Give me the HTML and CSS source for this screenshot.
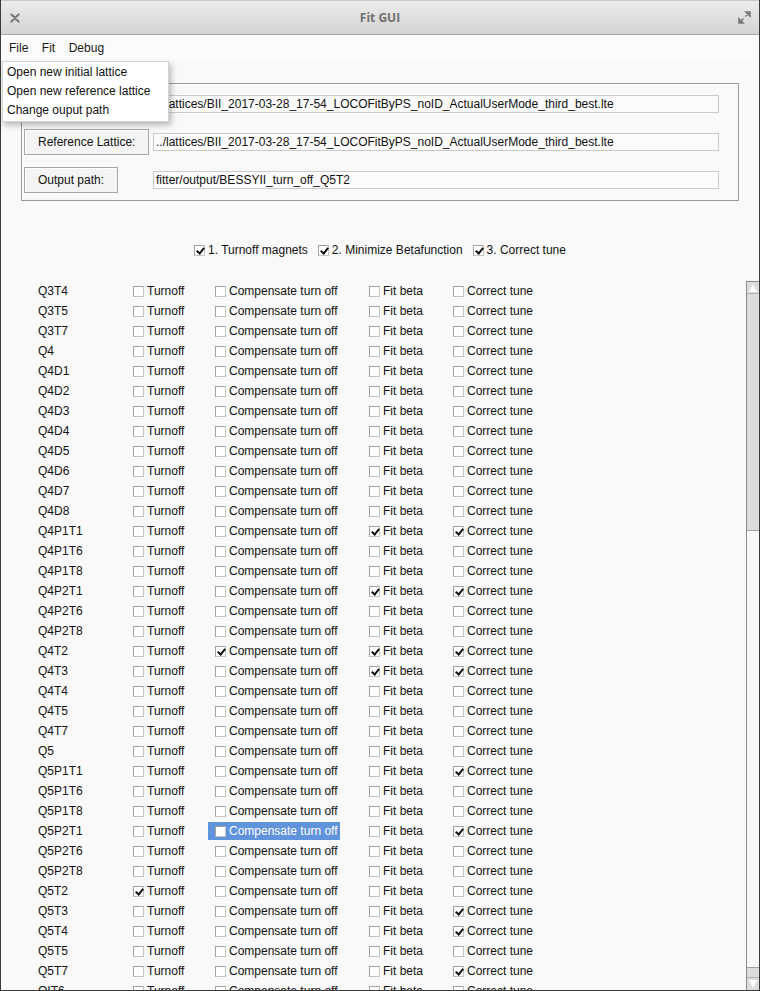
FILE: index.html
```html
<!DOCTYPE html>
<html>
<head>
<meta charset="utf-8">
<title>Fit GUI</title>
<link rel="stylesheet" href="styles.css">
</head>
<body>
<div class="window">
  <div class="titlebar">
    <svg class="tb-close" width="10" height="10" viewBox="0 0 10 10"><path d="M1.5 1.5 L8.5 8.5 M8.5 1.5 L1.5 8.5" stroke="#7a7a7a" stroke-width="2.2" stroke-linecap="round"/></svg>
    <div class="tb-title">Fit GUI</div>
    <svg class="tb-max" width="13" height="13" viewBox="0 0 13 13"><path d="M7.5 5.5 L11.5 1.5 M8 1 L12 1 L12 5 Z M5.5 7.5 L1.5 11.5 M1 8 L1 12 L5 12 Z" stroke="#7a7a7a" stroke-width="1.6" fill="#7a7a7a"/></svg>
  </div>
  <div class="menubar">
    <span class="mi">File</span><span class="mi">Fit</span><span class="mi">Debug</span>
  </div>
  <div class="main">
    <div class="frame">
      <div class="btn">Initial Lattice:</div>
      <div class="field">../lattices/BII_2017-03-28_17-54_LOCOFitByPS_noID_ActualUserMode_third_best.lte</div>
      <div class="btn">Reference Lattice:</div>
      <div class="field">../lattices/BII_2017-03-28_17-54_LOCOFitByPS_noID_ActualUserMode_third_best.lte</div>
      <div class="btn">Output path:</div>
      <div class="field">fitter/output/BESSYII_turn_off_Q5T2</div>
    </div>
    <div class="steps">
      <label class="ck"><i class="cb on"></i>1. Turnoff magnets</label>
      <label class="ck"><i class="cb on"></i>2. Minimize Betafunction</label>
      <label class="ck"><i class="cb on"></i>3. Correct tune</label>
    </div>
    <div class="listwrap">
      <div class="list">
        <div class="row"><span class="nm">Q3T4</span><label class="ck"><i class="cb"></i>Turnoff</label><label class="ck"><i class="cb"></i>Compensate turn off</label><label class="ck"><i class="cb"></i>Fit beta</label><label class="ck"><i class="cb"></i>Correct tune</label></div>
        <div class="row"><span class="nm">Q3T5</span><label class="ck"><i class="cb"></i>Turnoff</label><label class="ck"><i class="cb"></i>Compensate turn off</label><label class="ck"><i class="cb"></i>Fit beta</label><label class="ck"><i class="cb"></i>Correct tune</label></div>
        <div class="row"><span class="nm">Q3T7</span><label class="ck"><i class="cb"></i>Turnoff</label><label class="ck"><i class="cb"></i>Compensate turn off</label><label class="ck"><i class="cb"></i>Fit beta</label><label class="ck"><i class="cb"></i>Correct tune</label></div>
        <div class="row"><span class="nm">Q4</span><label class="ck"><i class="cb"></i>Turnoff</label><label class="ck"><i class="cb"></i>Compensate turn off</label><label class="ck"><i class="cb"></i>Fit beta</label><label class="ck"><i class="cb"></i>Correct tune</label></div>
        <div class="row"><span class="nm">Q4D1</span><label class="ck"><i class="cb"></i>Turnoff</label><label class="ck"><i class="cb"></i>Compensate turn off</label><label class="ck"><i class="cb"></i>Fit beta</label><label class="ck"><i class="cb"></i>Correct tune</label></div>
        <div class="row"><span class="nm">Q4D2</span><label class="ck"><i class="cb"></i>Turnoff</label><label class="ck"><i class="cb"></i>Compensate turn off</label><label class="ck"><i class="cb"></i>Fit beta</label><label class="ck"><i class="cb"></i>Correct tune</label></div>
        <div class="row"><span class="nm">Q4D3</span><label class="ck"><i class="cb"></i>Turnoff</label><label class="ck"><i class="cb"></i>Compensate turn off</label><label class="ck"><i class="cb"></i>Fit beta</label><label class="ck"><i class="cb"></i>Correct tune</label></div>
        <div class="row"><span class="nm">Q4D4</span><label class="ck"><i class="cb"></i>Turnoff</label><label class="ck"><i class="cb"></i>Compensate turn off</label><label class="ck"><i class="cb"></i>Fit beta</label><label class="ck"><i class="cb"></i>Correct tune</label></div>
        <div class="row"><span class="nm">Q4D5</span><label class="ck"><i class="cb"></i>Turnoff</label><label class="ck"><i class="cb"></i>Compensate turn off</label><label class="ck"><i class="cb"></i>Fit beta</label><label class="ck"><i class="cb"></i>Correct tune</label></div>
        <div class="row"><span class="nm">Q4D6</span><label class="ck"><i class="cb"></i>Turnoff</label><label class="ck"><i class="cb"></i>Compensate turn off</label><label class="ck"><i class="cb"></i>Fit beta</label><label class="ck"><i class="cb"></i>Correct tune</label></div>
        <div class="row"><span class="nm">Q4D7</span><label class="ck"><i class="cb"></i>Turnoff</label><label class="ck"><i class="cb"></i>Compensate turn off</label><label class="ck"><i class="cb"></i>Fit beta</label><label class="ck"><i class="cb"></i>Correct tune</label></div>
        <div class="row"><span class="nm">Q4D8</span><label class="ck"><i class="cb"></i>Turnoff</label><label class="ck"><i class="cb"></i>Compensate turn off</label><label class="ck"><i class="cb"></i>Fit beta</label><label class="ck"><i class="cb"></i>Correct tune</label></div>
        <div class="row"><span class="nm">Q4P1T1</span><label class="ck"><i class="cb"></i>Turnoff</label><label class="ck"><i class="cb"></i>Compensate turn off</label><label class="ck"><i class="cb on"></i>Fit beta</label><label class="ck"><i class="cb on"></i>Correct tune</label></div>
        <div class="row"><span class="nm">Q4P1T6</span><label class="ck"><i class="cb"></i>Turnoff</label><label class="ck"><i class="cb"></i>Compensate turn off</label><label class="ck"><i class="cb"></i>Fit beta</label><label class="ck"><i class="cb"></i>Correct tune</label></div>
        <div class="row"><span class="nm">Q4P1T8</span><label class="ck"><i class="cb"></i>Turnoff</label><label class="ck"><i class="cb"></i>Compensate turn off</label><label class="ck"><i class="cb"></i>Fit beta</label><label class="ck"><i class="cb"></i>Correct tune</label></div>
        <div class="row"><span class="nm">Q4P2T1</span><label class="ck"><i class="cb"></i>Turnoff</label><label class="ck"><i class="cb"></i>Compensate turn off</label><label class="ck"><i class="cb on"></i>Fit beta</label><label class="ck"><i class="cb on"></i>Correct tune</label></div>
        <div class="row"><span class="nm">Q4P2T6</span><label class="ck"><i class="cb"></i>Turnoff</label><label class="ck"><i class="cb"></i>Compensate turn off</label><label class="ck"><i class="cb"></i>Fit beta</label><label class="ck"><i class="cb"></i>Correct tune</label></div>
        <div class="row"><span class="nm">Q4P2T8</span><label class="ck"><i class="cb"></i>Turnoff</label><label class="ck"><i class="cb"></i>Compensate turn off</label><label class="ck"><i class="cb"></i>Fit beta</label><label class="ck"><i class="cb"></i>Correct tune</label></div>
        <div class="row"><span class="nm">Q4T2</span><label class="ck"><i class="cb"></i>Turnoff</label><label class="ck"><i class="cb on"></i>Compensate turn off</label><label class="ck"><i class="cb on"></i>Fit beta</label><label class="ck"><i class="cb on"></i>Correct tune</label></div>
        <div class="row"><span class="nm">Q4T3</span><label class="ck"><i class="cb"></i>Turnoff</label><label class="ck"><i class="cb"></i>Compensate turn off</label><label class="ck"><i class="cb on"></i>Fit beta</label><label class="ck"><i class="cb on"></i>Correct tune</label></div>
        <div class="row"><span class="nm">Q4T4</span><label class="ck"><i class="cb"></i>Turnoff</label><label class="ck"><i class="cb"></i>Compensate turn off</label><label class="ck"><i class="cb"></i>Fit beta</label><label class="ck"><i class="cb"></i>Correct tune</label></div>
        <div class="row"><span class="nm">Q4T5</span><label class="ck"><i class="cb"></i>Turnoff</label><label class="ck"><i class="cb"></i>Compensate turn off</label><label class="ck"><i class="cb"></i>Fit beta</label><label class="ck"><i class="cb"></i>Correct tune</label></div>
        <div class="row"><span class="nm">Q4T7</span><label class="ck"><i class="cb"></i>Turnoff</label><label class="ck"><i class="cb"></i>Compensate turn off</label><label class="ck"><i class="cb"></i>Fit beta</label><label class="ck"><i class="cb"></i>Correct tune</label></div>
        <div class="row"><span class="nm">Q5</span><label class="ck"><i class="cb"></i>Turnoff</label><label class="ck"><i class="cb"></i>Compensate turn off</label><label class="ck"><i class="cb"></i>Fit beta</label><label class="ck"><i class="cb"></i>Correct tune</label></div>
        <div class="row"><span class="nm">Q5P1T1</span><label class="ck"><i class="cb"></i>Turnoff</label><label class="ck"><i class="cb"></i>Compensate turn off</label><label class="ck"><i class="cb"></i>Fit beta</label><label class="ck"><i class="cb on"></i>Correct tune</label></div>
        <div class="row"><span class="nm">Q5P1T6</span><label class="ck"><i class="cb"></i>Turnoff</label><label class="ck"><i class="cb"></i>Compensate turn off</label><label class="ck"><i class="cb"></i>Fit beta</label><label class="ck"><i class="cb"></i>Correct tune</label></div>
        <div class="row"><span class="nm">Q5P1T8</span><label class="ck"><i class="cb"></i>Turnoff</label><label class="ck"><i class="cb"></i>Compensate turn off</label><label class="ck"><i class="cb"></i>Fit beta</label><label class="ck"><i class="cb"></i>Correct tune</label></div>
        <div class="row"><span class="nm">Q5P2T1</span><label class="ck"><i class="cb"></i>Turnoff</label><label class="ck sel"><i class="cb"></i>Compensate turn off</label><label class="ck"><i class="cb"></i>Fit beta</label><label class="ck"><i class="cb on"></i>Correct tune</label></div>
        <div class="row"><span class="nm">Q5P2T6</span><label class="ck"><i class="cb"></i>Turnoff</label><label class="ck"><i class="cb"></i>Compensate turn off</label><label class="ck"><i class="cb"></i>Fit beta</label><label class="ck"><i class="cb"></i>Correct tune</label></div>
        <div class="row"><span class="nm">Q5P2T8</span><label class="ck"><i class="cb"></i>Turnoff</label><label class="ck"><i class="cb"></i>Compensate turn off</label><label class="ck"><i class="cb"></i>Fit beta</label><label class="ck"><i class="cb"></i>Correct tune</label></div>
        <div class="row"><span class="nm">Q5T2</span><label class="ck"><i class="cb on"></i>Turnoff</label><label class="ck"><i class="cb"></i>Compensate turn off</label><label class="ck"><i class="cb"></i>Fit beta</label><label class="ck"><i class="cb"></i>Correct tune</label></div>
        <div class="row"><span class="nm">Q5T3</span><label class="ck"><i class="cb"></i>Turnoff</label><label class="ck"><i class="cb"></i>Compensate turn off</label><label class="ck"><i class="cb"></i>Fit beta</label><label class="ck"><i class="cb on"></i>Correct tune</label></div>
        <div class="row"><span class="nm">Q5T4</span><label class="ck"><i class="cb"></i>Turnoff</label><label class="ck"><i class="cb"></i>Compensate turn off</label><label class="ck"><i class="cb"></i>Fit beta</label><label class="ck"><i class="cb on"></i>Correct tune</label></div>
        <div class="row"><span class="nm">Q5T5</span><label class="ck"><i class="cb"></i>Turnoff</label><label class="ck"><i class="cb"></i>Compensate turn off</label><label class="ck"><i class="cb"></i>Fit beta</label><label class="ck"><i class="cb"></i>Correct tune</label></div>
        <div class="row"><span class="nm">Q5T7</span><label class="ck"><i class="cb"></i>Turnoff</label><label class="ck"><i class="cb"></i>Compensate turn off</label><label class="ck"><i class="cb"></i>Fit beta</label><label class="ck"><i class="cb on"></i>Correct tune</label></div>
        <div class="row"><span class="nm">QIT6</span><label class="ck"><i class="cb"></i>Turnoff</label><label class="ck"><i class="cb"></i>Compensate turn off</label><label class="ck"><i class="cb"></i>Fit beta</label><label class="ck"><i class="cb"></i>Correct tune</label></div>
      </div>
      <div class="sb">
        <div class="sb-arrow"><i class="tri-up"></i></div>
        <div class="sb-track1"></div>
        <div class="sb-thumb"></div>
        <div class="sb-track2"></div>
        <div class="sb-arrow down"><i class="tri-down"></i></div>
      </div>
    </div>
  </div>
  <div class="dropdown">
    <div class="dd-item">Open new initial lattice</div>
    <div class="dd-item">Open new reference lattice</div>
    <div class="dd-item">Change ouput path</div>
  </div>
</div>
</body>
</html>
```

FILE: styles.css
```css
* { box-sizing: border-box; }
html, body { margin: 0; padding: 0; background: #f9f9f9; }
body {
  font-family: "Liberation Sans", Arial, sans-serif;
  font-size: 12px;
  color: #111;
}
.window {
  position: relative;
  width: 760px;
  height: 991px;
  border: 1px solid #3a3a3a;
  border-top: none;
  display: flex;
  flex-direction: column;
  overflow: hidden;
  background: #f9f9f9;
}
.titlebar {
  flex: none;
  height: 35px;
  background: linear-gradient(#ececec, #d3d3d3);
  border-bottom: 1px solid #a6a6a6;
  border-top: 1px solid #c8c8c8;
  display: grid;
  grid-template-columns: 40px 1fr 40px;
  align-items: center;
  padding: 0 9px;
}
.tb-close { justify-self: start; }
.tb-max { justify-self: end; margin-right: -1px; }
.tb-title {
  text-align: center;
  font-family: "Open Sans", "DejaVu Sans", sans-serif;
  font-weight: bold;
  font-size: 12px;
  color: #707070;
}
.menubar {
  flex: none;
  height: 26px;
  display: flex;
  align-items: center;
  gap: 13.5px;
  padding-left: 8px;
  background: #fbfbfb;
  font-size: 12px;
  color: #1a1a1a;
}
.main {
  flex: 1;
  display: flex;
  flex-direction: column;
  min-height: 0;
}
.frame {
  flex: none;
  margin: 22px 20px 0 20px;
  border: 1px solid #9c9c9c;
  box-shadow: inset 1px 1px 0 #fff;
  padding: 7px 19px 7px 2px;
  display: grid;
  grid-template-columns: 129px 1fr;
  row-gap: 12px;
  align-items: center;
}
.btn {
  justify-self: start;
  height: 26px;
  padding: 0 13px;
  display: flex;
  align-items: center;
  border: 1px solid #a8a8a8;
  background: #f4f4f4;
  box-shadow: inset 1px 1px 0 #fff;
  color: #111;
}
.field {
  height: 18px;
  line-height: 16px;
  padding: 0 2px;
  border: 1px solid #cacaca;
  background: #fbfbfb;
  white-space: nowrap;
  overflow: hidden;
}
.steps {
  flex: none;
  margin-top: 42px;
  height: 14px;
  display: flex;
  justify-content: center;
  align-items: center;
  gap: 10px;
}
.steps .ck { padding: 0; }
.listwrap {
  flex: 1;
  min-height: 0;
  display: flex;
  margin-top: 24px;
}
.list {
  flex: 1;
  overflow: hidden;
}
.row {
  height: 20px;
  display: grid;
  grid-template-columns: 88px 82px 154px 84px auto;
  align-items: center;
  padding-left: 37px;
}
.nm { color: #111; }
.ck {
  justify-self: start;
  height: 18px;
  display: flex;
  align-items: center;
  gap: 3px;
  padding: 0 2px 0 7px;
  white-space: nowrap;
}
.ck.sel {
  background: #5f93dc;
  color: #fff;
}
.cb {
  position: relative;
  flex: none;
  width: 11px;
  height: 11px;
  border: 1px solid #a2a2a2;
  border-right-color: #c4c4c4;
  border-bottom-color: #c4c4c4;
  background: #fff;
}
.cb.on::after {
  content: "";
  position: absolute;
  left: 3px;
  top: 0px;
  width: 3px;
  height: 6px;
  border-right: 2px solid #111;
  border-bottom: 2px solid #111;
  transform: rotate(40deg);
}
.sb {
  flex: none;
  width: 13px;
  display: flex;
  flex-direction: column;
  border-left: 1px solid #8c8c8c;
  border-top: 1px solid #8c8c8c;
  background: #dcdcdc;
}
.sb-arrow {
  flex: none;
  height: 12px;
  display: flex;
  justify-content: center;
  align-items: center;
  border-bottom: 1px solid #b0b0b0;
}
.sb-arrow.down {
  flex: 1;
  border-bottom: none;
  border-top: 1px solid #b0b0b0;
}
.tri-up {
  width: 0; height: 0;
  border-left: 4px solid transparent;
  border-right: 4px solid transparent;
  border-bottom: 8px solid #fff;
}
.tri-down {
  width: 0; height: 0;
  border-left: 4px solid transparent;
  border-right: 4px solid transparent;
  border-top: 8px solid #fff;
}
.sb-track1 { flex: none; height: 236px; }
.sb-thumb {
  flex: none;
  height: 438px;
  background: #f7f7f7;
  border-top: 1px solid #a0a0a0;
  border-bottom: 1px solid #a0a0a0;
}
.sb-track2 { flex: none; height: 9px; }
.dropdown {
  position: absolute;
  left: 1px;
  top: 61px;
  width: 167px;
  padding: 1px 0;
  background: #fff;
  border: 1px solid #d4d4d4;
  box-shadow: 2px 3px 6px rgba(0,0,0,0.28);
}
.dd-item {
  height: 19px;
  line-height: 19px;
  padding-left: 4px;
  color: #111;
  white-space: nowrap;
}
```
